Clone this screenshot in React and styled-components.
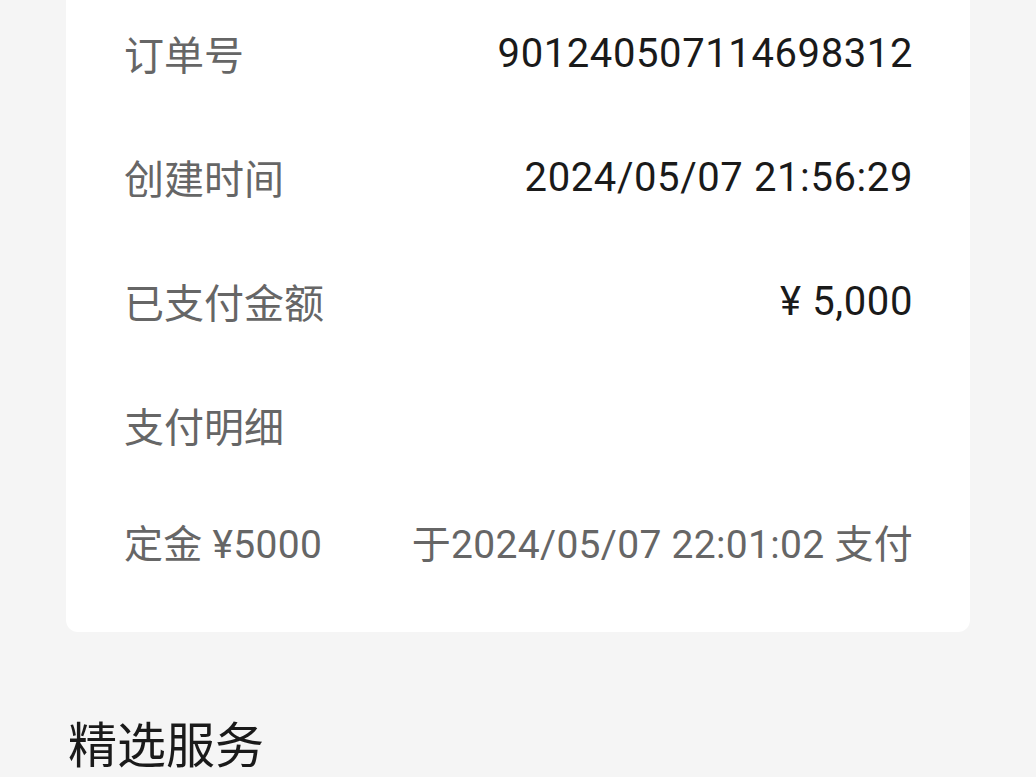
import React from 'react'
import styled, { createGlobalStyle } from 'styled-components'

const GlobalStyle = createGlobalStyle`
    html, body {
        margin: 0;
        padding: 0;
        background: #f5f5f5;
    }
    body {
        font-family: Roboto, "Noto Sans CJK SC", sans-serif;
        -webkit-font-smoothing: antialiased;
    }
`

const rows = [
    { label: '订单号', value: '901240507114698312' },
    { label: '创建时间', value: '2024/05/07 21:56:29' },
    { label: '已支付金额', value: '¥ 5,000' },
    { label: '支付明细', value: '' },
]

const App = () => {
    return (
        <Page>
            <GlobalStyle />
            <Card>
                <List>
                    {rows.map(row => (
                        <Row key={row.label}>
                            <Label>{row.label}</Label>
                            <Value>{row.value}</Value>
                        </Row>
                    ))}
                    <DetailRow>
                        <span>定金 ¥5000</span>
                        <span>于2024/05/07 22:01:02 支付</span>
                    </DetailRow>
                </List>
            </Card>
            <SectionTitle>精选服务</SectionTitle>
        </Page>
    )
}

export default App

const Page = styled.div`
    width: 1036px;
    height: 777px;
    overflow: hidden;
    padding: 0 66px;
    box-sizing: border-box;
`

const Card = styled.div`
    background-color: #fff;
    border-radius: 0 0 12px 12px;
    padding: 25px 57px 71px 58px;
`

const List = styled.div`
    display: flex;
    flex-direction: column;
    gap: 68px;
`

const Row = styled.div`
    display: flex;
    justify-content: space-between;
    align-items: center;
    height: 56px;
    font-size: 40px;
`

const Label = styled.span`
    color: #666;
`

const Value = styled.span`
    color: #1a1a1a;
    letter-spacing: 0.6px;
`

const DetailRow = styled.div`
    display: flex;
    justify-content: space-between;
    align-items: center;
    height: 40px;
    font-size: 39px;
    letter-spacing: 0.3px;
    color: #666;
`

const SectionTitle = styled.div`
    margin-top: 87px;
    padding-left: 2px;
    height: 56px;
    line-height: 56px;
    font-size: 49px;
    color: #1a1a1a;
`
